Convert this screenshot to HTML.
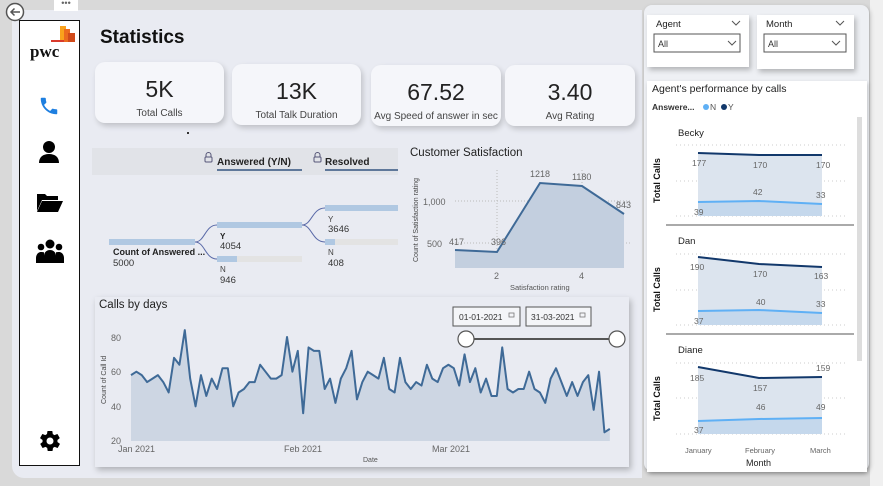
<!DOCTYPE html>
<html><head><meta charset="utf-8"><style>
*{margin:0;padding:0;box-sizing:border-box}
body{width:883px;height:486px;overflow:hidden;background:#d9d9d9;font-family:"Liberation Sans",sans-serif;position:relative;color:#252423}
.a{position:absolute}
.card{position:absolute;background:#f5f6fa;border-radius:10px;box-shadow:2px 3px 6px rgba(0,0,0,.18);text-align:center}
.card .v{font-size:23px;margin-top:14px;color:#222}
.card .l{font-size:10px;color:#444;margin-top:5px;white-space:nowrap}
.t{font-size:9px;fill:#666}
</style></head><body>
<div class="a" style="left:12px;top:10px;width:630px;height:468px;background:#e9ebf2;border-radius:0 0 0 12px"></div>
<div class="a" style="left:870px;top:0;width:13px;height:486px;background:#f0f0f0"></div>
<div class="a" style="left:54px;top:0;width:24px;height:11px;background:#fff;font-size:9px;color:#666;text-align:center;line-height:6px">•••</div>
<svg class="a" style="left:5px;top:2px" width="20" height="20"><circle cx="10" cy="10" r="8.5" fill="#fff" stroke="#555" stroke-width="1.5"/><path d="M15 10H6M9.5 6.5L6 10l3.5 3.5" stroke="#555" stroke-width="1.5" fill="none"/></svg>
<div class="a" style="left:19px;top:20px;width:61px;height:446px;background:#fff;border:1.5px solid #111"></div>
<svg class="a" style="left:28px;top:24px" width="50" height="40">
<rect x="32" y="2" width="6" height="16" fill="#f9a21c"/><rect x="36" y="5" width="6" height="13" fill="#eb6b1e"/><rect x="40" y="9" width="7" height="9" fill="#d04a1a"/><rect x="23" y="16" width="13" height="2" fill="#d93a2b"/>
<text x="2" y="33" font-family="Liberation Serif" font-weight="bold" font-size="17" fill="#111">pwc</text></svg>
<svg class="a" style="left:38px;top:95px" width="22" height="22" viewBox="0 0 24 24"><path d="M6.6 10.8c1.4 2.8 3.8 5.1 6.6 6.6l2.2-2.2c.3-.3.7-.4 1-.2 1.1.4 2.300.6 3.6.6.6 0 1 .4 1 1V20c0 .6-.4 1-1 1C10.6 21 3 13.4 3 4c0-.6.4-1 1-1h3.5c.6 0 1 .4 1 1 0 1.3.2 2.5.6 3.6.1.3 0 .7-.2 1z" fill="#1e7fe0"/></svg>
<svg class="a" style="left:38px;top:140px" width="22" height="24" viewBox="0 0 22 24"><circle cx="11" cy="7" r="6" fill="#000"/><path d="M1 23c0-6 4-9 10-9s10 3 10 9z" fill="#000"/></svg>
<svg class="a" style="left:36px;top:191px" width="28" height="22" viewBox="0 0 28 22"><path d="M1 3h8l2 2h11v4H6L1 20z" fill="#000"/><path d="M6 10h21l-5 11H1z" fill="#000"/></svg>
<svg class="a" style="left:36px;top:238px" width="28" height="26" viewBox="0 0 28 26"><circle cx="14" cy="6" r="4.5"/><circle cx="5" cy="9" r="3.3"/><circle cx="23" cy="9" r="3.3"/><path d="M8 25v-7c0-4 3-6 6-6s6 2 6 6v7z"/><path d="M0 25v-5c0-3 2-6 5-6s3 .5 3 .5v10.5zM28 25v-5c0-3-2-6-5-6s-3 .5-3 .5v10.5z"/></svg>
<svg class="a" style="left:38px;top:429px" width="24" height="24" viewBox="0 0 24 24"><path fill="#000" d="M19.4 13c.1-.3.1-.7.1-1s0-.7-.1-1l2.1-1.6c.2-.2.2-.4.1-.6l-2-3.5c-.1-.2-.4-.3-.6-.2l-2.5 1c-.5-.4-1.1-.7-1.7-1l-.4-2.6c0-.3-.2-.5-.5-.5h-4c-.2 0-.5.2-.5.4l-.4 2.700c-.6.2-1.1.6-1.7 1l-2.5-1c-.2-.1-.5 0-.6.2l-2 3.5c-.1.2-.1.5.1.6L4.6 11c0 .3-.1.7-.1 1s0 .7.1 1l-2.1 1.6c-.2.2-.2.4-.1.6l2 3.5c.1.2.4.3.6.2l2.5-1c.5.4 1.1.7 1.7 1l.4 2.7c0 .2.2.4.5.4h4c.2 0 .5-.2.5-.4l.4-2.7c.6-.3 1.2-.6 1.7-1l2.5 1c.2.1.5 0 .6-.2l2-3.5c.1-.2.1-.5-.1-.6zM12 15.5a3.5 3.5 0 110-7 3.5 3.5 0 010 7z"/></svg>

<div class="a" style="left:100px;top:27px;font-size:19px;font-weight:bold;color:#111">Statistics</div>
<div class="card" style="left:95px;top:62px;width:129px;height:61px"><div class="v">5K</div><div class="l">Total Calls</div></div>
<div class="card" style="left:232px;top:64px;width:129px;height:61px"><div class="v">13K</div><div class="l">Total Talk Duration</div></div>
<div class="card" style="left:371px;top:65px;width:130px;height:61px"><div class="v">67.52</div><div class="l">Avg Speed of answer in sec</div></div>
<div class="card" style="left:505px;top:65px;width:130px;height:61px"><div class="v">3.40</div><div class="l">Avg Rating</div></div>
<div class="a" style="left:187px;top:132px;width:2px;height:2px;background:#333"></div>

<div class="a" style="left:92px;top:148px;width:306px;height:27px;background:#e1e3e8"></div>
<svg class="a" style="left:0;top:0" width="640" height="486">
<text x="217" y="165" font-size="10" font-weight="bold" fill="#222">Answered (Y/N)</text>
<text x="325" y="165" font-size="10" font-weight="bold" fill="#222">Resolved</text>
<rect x="205" y="157" width="7" height="5" rx="1" fill="none" stroke="#557" stroke-width="1"/><path d="M206 157v-2a2.5 2.5 0 015 0v2" fill="none" stroke="#557"/>
<rect x="314" y="157" width="7" height="5" rx="1" fill="none" stroke="#557" stroke-width="1"/><path d="M315 157v-2a2.5 2.5 0 015 0v2" fill="none" stroke="#557"/>
<line x1="217" y1="170" x2="302" y2="170" stroke="#12386b" stroke-width="1.3"/>
<line x1="325" y1="170" x2="398" y2="170" stroke="#12386b" stroke-width="1.3"/>
<rect x="109" y="239" width="86" height="6" fill="#b0c8e2"/>
<rect x="217" y="222" width="85" height="6" fill="#b0c8e2"/>
<rect x="217" y="256" width="85" height="6" fill="#e3e3e3"/><rect x="217" y="256" width="20" height="6" fill="#b0c8e2"/>
<rect x="325" y="205" width="73" height="6" fill="#b0c8e2"/>
<rect x="325" y="239" width="73" height="6" fill="#e3e3e3"/><rect x="325" y="239" width="10" height="6" fill="#b0c8e2"/>
<path d="M195 242C205 242 205 225 217 225M195 242C205 242 205 259 217 259M302 225C312 225 312 208 325 208M302 225C312 225 312 242 325 242" fill="none" stroke="#5a6aa8" stroke-width="1"/>
<text x="113" y="255" font-size="9" font-weight="bold" fill="#222">Count of Answered ...</text><text x="113" y="266" font-size="9.5" fill="#333">5000</text>
<text x="220" y="239" font-size="8" font-weight="bold" fill="#222">Y</text><text x="220" y="249" font-size="9.5" fill="#333">4054</text>
<text x="220" y="272" font-size="8" fill="#444">N</text><text x="220" y="283" font-size="9.5" fill="#333">946</text>
<text x="328" y="222" font-size="8" fill="#444">Y</text><text x="328" y="232" font-size="9.5" fill="#333">3646</text>
<text x="328" y="255" font-size="8" fill="#444">N</text><text x="328" y="266" font-size="9.5" fill="#333">408</text>

<text x="410" y="156" font-size="11.5" fill="#222">Customer Satisfaction</text>
<line x1="455" y1="201" x2="630" y2="201" stroke="#bbb" stroke-dasharray="1 2"/><line x1="455" y1="243" x2="630" y2="243" stroke="#bbb" stroke-dasharray="1 2"/>
<line x1="497" y1="170" x2="497" y2="268" stroke="#bbb" stroke-dasharray="1 2"/><line x1="582" y1="170" x2="582" y2="268" stroke="#bbb" stroke-dasharray="1 2"/>
<path d="M455 250L497 252L540 183L582 186L624 214V268H455Z" fill="#c3cfdf"/>
<path d="M455 250L497 252L540 183L582 186L624 214" fill="none" stroke="#3f6a97" stroke-width="2"/>
<text class="t" x="423" y="205">1,000</text><text class="t" x="427" y="247">500</text>
<text class="t" x="449" y="245">417</text><text class="t" x="491" y="245">396</text><text class="t" x="530" y="177">1218</text><text class="t" x="572" y="180">1180</text><text class="t" x="616" y="208">843</text>
<text class="t" x="494" y="279">2</text><text class="t" x="579" y="279">4</text>
<text x="510" y="290" font-size="7.5" fill="#555">Satisfaction rating</text>
<text x="0" y="0" font-size="7" fill="#444" transform="translate(418,262) rotate(-90)">Count of Satisfaction rating</text>
</svg>

<div class="a" style="left:95px;top:297px;width:534px;height:170px;background:#e9ebf2;box-shadow:2px 3px 6px rgba(0,0,0,.25)"></div>
<svg class="a" style="left:0;top:0" width="640" height="486">
<text x="99" y="308" font-size="11.5" fill="#222">Calls by days</text>
<g transform="translate(131,441) scale(5.38,-1.733)">
<polygon fill="#cdd6e3" points="0,0 0,38 1,40 2,38 3,34 4,36 5,38 6,34 7,28 8,48 9,44 10,64 11,36 12,20 13,38 14,26 15,36 16,30 17,42 18,42 19,20 20,28 21,30 22,34 23,34 24,44 25,40 26,36 27,36 28,38 29,60 30,40 31,52 32,16 33,54 34,52 35,52 36,30 37,36 38,22 39,36 40,42 41,52 42,24 43,34 44,40 45,38 46,36 47,48 48,30 49,28 50,48 51,34 52,30 53,34 54,32 55,44 56,36 57,34 58,42 59,44 60,42 61,32 62,50 63,34 64,42 65,28 66,36 67,26 68,26 69,54 70,30 71,28 72,30 73,30 74,40 75,30 76,28 77,22 78,36 79,42 80,34 81,26 82,34 83,26 84,34 85,38 86,18 87,40 88,5 89,7 89,0"/>
<polyline fill="none" stroke="#3f6a97" stroke-width="2" vector-effect="non-scaling-stroke" stroke-linejoin="round" points="0,38 1,40 2,38 3,34 4,36 5,38 6,34 7,28 8,48 9,44 10,64 11,36 12,20 13,38 14,26 15,36 16,30 17,42 18,42 19,20 20,28 21,30 22,34 23,34 24,44 25,40 26,36 27,36 28,38 29,60 30,40 31,52 32,16 33,54 34,52 35,52 36,30 37,36 38,22 39,36 40,42 41,52 42,24 43,34 44,40 45,38 46,36 47,48 48,30 49,28 50,48 51,34 52,30 53,34 54,32 55,44 56,36 57,34 58,42 59,44 60,42 61,32 62,50 63,34 64,42 65,28 66,36 67,26 68,26 69,54 70,30 71,28 72,30 73,30 74,40 75,30 76,28 77,22 78,36 79,42 80,34 81,26 82,34 83,26 84,34 85,38 86,18 87,40 88,5 89,7"/>
</g>
<text class="t" x="111" y="341">80</text><text class="t" x="111" y="375">60</text><text class="t" x="111" y="410">40</text><text class="t" x="111" y="444">20</text>
<text class="t" x="118" y="452">Jan 2021</text><text class="t" x="284" y="452">Feb 2021</text><text class="t" x="432" y="452">Mar 2021</text>
<text x="363" y="462" font-size="7" fill="#555">Date</text>
<text x="0" y="0" font-size="7" fill="#444" transform="translate(106,404) rotate(-90)">Count of Call Id</text>
<rect x="453" y="307" width="67" height="19" fill="#f4f5f8" stroke="#555"/><text x="459" y="320" font-size="8.5" fill="#333">01-01-2021</text><rect x="509" y="313" width="5" height="4" fill="none" stroke="#777" stroke-width=".8"/>
<rect x="526" y="307" width="65" height="19" fill="#f4f5f8" stroke="#555"/><text x="531" y="320" font-size="8.5" fill="#333">31-03-2021</text><rect x="580" y="313" width="5" height="4" fill="none" stroke="#777" stroke-width=".8"/>
<line x1="466" y1="339" x2="617" y2="339" stroke="#555" stroke-width="2"/>
<circle cx="466" cy="339" r="8" fill="#fff" stroke="#555" stroke-width="1.2"/><circle cx="617" cy="339" r="8" fill="#fff" stroke="#555" stroke-width="1.2"/>
</svg>

<div class="a" style="left:644px;top:5px;width:225px;height:466px;background:#eef0f4;border-radius:8px;box-shadow:1px 2px 5px rgba(0,0,0,.25)"></div>
<div class="a" style="left:647px;top:15px;width:102px;height:52px;background:#fff;box-shadow:2px 3px 5px rgba(0,0,0,.25)"></div>
<div class="a" style="left:757px;top:15px;width:97px;height:54px;background:#fff;box-shadow:2px 3px 5px rgba(0,0,0,.25)"></div>
<div class="a" style="left:647px;top:81px;width:220px;height:391px;background:#fff;box-shadow:1px 2px 4px rgba(0,0,0,.2)"></div>
<svg class="a" style="left:640px;top:0" width="243" height="486">
<text x="16" y="27" font-size="9.5" fill="#222">Agent</text><path d="M92 21l4 4 4-4" fill="none" stroke="#555"/>
<rect x="14" y="34" width="86" height="18" fill="#fff" stroke="#555"/><text x="18" y="47" font-size="9" fill="#333">All</text><path d="M88 41l4 4 4-4" fill="none" stroke="#555"/>
<text x="126" y="27" font-size="9.5" fill="#222">Month</text><path d="M196 21l4 4 4-4" fill="none" stroke="#555"/>
<rect x="124" y="34" width="82" height="18" fill="#fff" stroke="#555"/><text x="128" y="47" font-size="9" fill="#333">All</text><path d="M192 41l4 4 4-4" fill="none" stroke="#555"/>
<text x="12" y="92" font-size="10.5" fill="#222">Agent's performance by calls</text>
<text x="12" y="110" font-size="8.5" fill="#333" font-weight="bold">Answere...</text><circle cx="66" cy="107" r="3" fill="#5fb0f5"/><text x="70" y="110" font-size="8.5" fill="#555">N</text><circle cx="84" cy="107" r="3" fill="#12386b"/><text x="88" y="110" font-size="8.5" fill="#555">Y</text>
<rect x="217" y="117" width="5" height="244" fill="#ddd"/>
<line x1="26" y1="225" x2="214" y2="225" stroke="#555"/><line x1="26" y1="334" x2="214" y2="334" stroke="#555"/>
<g font-size="8.5" fill="#666">
<text x="38" y="136" fill="#222" font-size="9.5">Becky</text>
<g stroke="#ccc" stroke-dasharray="1 3"><line x1="36" y1="145" x2="205" y2="145"/><line x1="36" y1="181" x2="205" y2="181"/><line x1="36" y1="216" x2="205" y2="216"/></g>
<path d="M58 153L119 155L182 155V216H58Z" fill="#dce4ee"/><path d="M58 202L119 201L182 204V216H58Z" fill="#c5d8ec"/>
<path d="M58 153L119 155L182 155" fill="none" stroke="#12386b" stroke-width="2"/><path d="M58 202L119 201L182 204" fill="none" stroke="#5fb0f5" stroke-width="2"/>
<text x="52" y="166">177</text><text x="113" y="168">170</text><text x="176" y="168">170</text><text x="113" y="195">42</text><text x="176" y="198">33</text><text x="54" y="215">39</text>
<text x="38" y="244" fill="#222" font-size="9.5">Dan</text>
<g stroke="#ccc" stroke-dasharray="1 3"><line x1="36" y1="254" x2="205" y2="254"/><line x1="36" y1="290" x2="205" y2="290"/><line x1="36" y1="325" x2="205" y2="325"/></g>
<path d="M58 257L119 264L182 267V325H58Z" fill="#dce4ee"/><path d="M58 311L119 310L182 313V325H58Z" fill="#c5d8ec"/>
<path d="M58 257L119 264L182 267" fill="none" stroke="#12386b" stroke-width="2"/><path d="M58 311L119 310L182 313" fill="none" stroke="#5fb0f5" stroke-width="2"/>
<text x="50" y="270">190</text><text x="113" y="277">170</text><text x="174" y="279">163</text><text x="116" y="305">40</text><text x="176" y="307">33</text><text x="54" y="324">37</text>
<text x="38" y="353" fill="#222" font-size="9.5">Diane</text>
<g stroke="#ccc" stroke-dasharray="1 3"><line x1="36" y1="363" x2="205" y2="363"/><line x1="36" y1="398" x2="205" y2="398"/><line x1="36" y1="434" x2="205" y2="434"/></g>
<path d="M58 367L119 378L182 377V434H58Z" fill="#dce4ee"/><path d="M58 421L119 419L182 418V434H58Z" fill="#c5d8ec"/>
<path d="M58 367L119 378L182 377" fill="none" stroke="#12386b" stroke-width="2"/><path d="M58 421L119 419L182 418" fill="none" stroke="#5fb0f5" stroke-width="2"/>
<text x="50" y="381">185</text><text x="113" y="391">157</text><text x="176" y="371">159</text><text x="116" y="410">46</text><text x="176" y="410">49</text><text x="54" y="433">37</text>
<text x="45" y="453" font-size="7.5">January</text><text x="105" y="453" font-size="7.5">February</text><text x="170" y="453" font-size="7.5">March</text>
<text x="106" y="466" font-size="9" fill="#222">Month</text>
</g>
<g font-size="9" font-weight="bold" fill="#111"><text transform="translate(20,203) rotate(-90)">Total Calls</text><text transform="translate(20,312) rotate(-90)">Total Calls</text><text transform="translate(20,421) rotate(-90)">Total Calls</text></g>
</svg>
</body></html>
